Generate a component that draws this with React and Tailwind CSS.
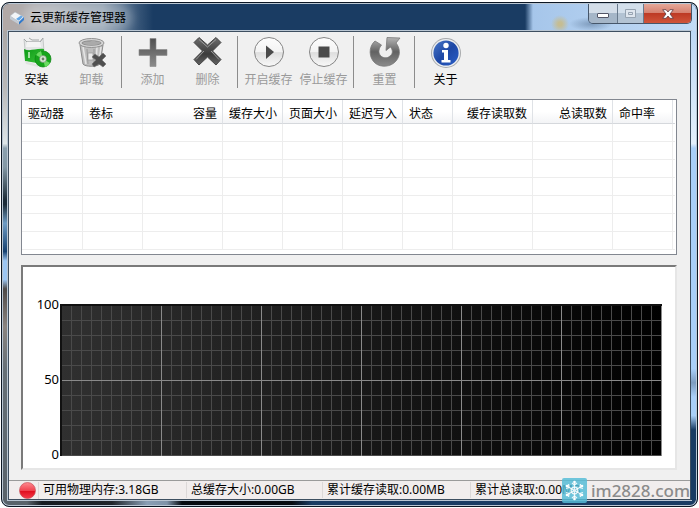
const tools = [
  [
    { label: '安装', icon: InstallIcon, enabled: true },
    { label: '卸载', icon: TrashIcon },
  ],
  [
    { label: '添加', icon: PlusIcon },
    { label: '删除', icon: CrossIcon },
  ],
  [
    { label: '开启缓存', icon: PlayIcon },
    { label: '停止缓存', icon: StopIcon },
  ],
  [{ label: '重置', icon: ResetIcon }],
  [{ label: '关于', icon: InfoIcon, enabled: true }],
]

const columns = [
  { title: '驱动器', className: 'w-[61px] text-left' },
  { title: '卷标', className: 'w-[60px] text-left' },
  { title: '容量', className: 'w-[80px] text-right' },
  { title: '缓存大小', className: 'w-[60px] text-left' },
  { title: '页面大小', className: 'w-[60px] text-left' },
  { title: '延迟写入', className: 'w-[60px] text-left' },
  { title: '状态', className: 'w-[50px] text-left' },
  { title: '缓存读取数', className: 'w-[80px] text-right' },
  { title: '总读取数', className: 'w-[80px] text-right' },
  { title: '命中率', className: 'w-[60px] text-left' },
]

const emptyRows = [0, 1, 2, 3, 4, 5, 6]

function InstallIcon() {
  return (
    <svg viewBox="0 0 32 32" className="size-8">
      <defs>
        <linearGradient id="boxGreen" x1="0" x2="1" y1="0" y2="1">
          <stop offset="0" stopColor="#0c9a16" />
          <stop offset="1" stopColor="#3fc63c" />
        </linearGradient>
      </defs>
      <path d="M3 3 6 6h13l3-4 1 14-19-2z" fill="#e4e6e6" stroke="#b5b9b9" strokeWidth=".7" />
      <path d="M3 3 6 6h13l3-4M8 2l3 2h7" fill="none" stroke="#a2a6a6" />
      <path d="M6 6h13l1 5H5z" fill="#f4f4f4" />
      <path d="M3 13c6 3 12-1 20 0l-1 15-18-3z" fill="url(#boxGreen)" />
      <path d="M4 25l14 4-1 2-12-3z" fill="#dfe3df" />
      <path d="M8 16v6" stroke="#d5f5d2" strokeWidth="1.5" />
      <circle cx="22" cy="23" r="8" fill="#16a51c" stroke="#0b8212" strokeWidth=".7" />
      <path d="M22 23 15 19a8 8 0 0 1 5-4zM22 23l7 4a8 8 0 0 1-5 4z" fill="#6bdc62" />
      <circle cx="22" cy="23" r="3.4" fill="#d9eed6" stroke="#777" strokeWidth=".6" />
      <circle cx="22" cy="23" r="1.4" fill="#6d7c6b" />
    </svg>
  )
}

function TrashIcon() {
  return (
    <svg viewBox="0 0 32 32" className="size-8">
      <path d="M4 9 7 28c2 3 14 3 17 0l3-19z" fill="#bdbdbd" stroke="#8b8b8b" />
      <path d="M7 11l3 17M21 11l-1 17M25 11l-2 14" stroke="#e5e5e5" strokeWidth="1.5" />
      <path d="M11 13l1 15M18 13v15" stroke="#999" />
      <ellipse cx="15.500" cy="7" rx="12.500" ry="4.500" fill="#d6d6d6" stroke="#929292" />
      <ellipse cx="15.500" cy="7" rx="10" ry="2.800" fill="#8a8a8a" />
      <path d="M6 7c4-3 8 0 11-3 3 3 6 0 8 3-5 3-14 3-19 0z" fill="#aaa" />
      <path d="M12 17h5v7h-5z" fill="#e9e9e9" stroke="#9a9a9a" strokeWidth=".7" />
      <path d="M16 21l3-3 4 3 4-4 3 3-4 4 4 4-3 3-4-3-5 3-2-3 4-4z" fill="#4f4f4f" stroke="#707070" strokeWidth=".6" />
    </svg>
  )
}

function PlusIcon() {
  return (
    <svg viewBox="0 0 32 32" className="size-8">
      <defs>
        <linearGradient id="plusGray" x1="0" x2="0" y1="0" y2="1">
          <stop offset="0" stopColor="#505050" />
          <stop offset="1" stopColor="#8c8c8c" />
        </linearGradient>
      </defs>
      <path d="M13 2.500h6v11h11v6H19v11h-6v-11H2v-6h11z" fill="url(#plusGray)" stroke="#8a8a8a" strokeWidth=".6" />
    </svg>
  )
}

function CrossIcon() {
  return (
    <svg viewBox="0 0 32 32" className="size-8">
      <defs>
        <linearGradient id="crossGray" x1="0" x2="0" y1="0" y2="1">
          <stop offset="0" stopColor="#6e6e6e" />
          <stop offset=".6" stopColor="#3c3c3c" />
          <stop offset="1" stopColor="#636363" />
        </linearGradient>
      </defs>
      <path
        d="M7 1.500 15.500 9l8.500-7.500 5 5L20.500 15l8.500 8.500-5 5.500-8.500-8-8.500 8-5-5.500L10.500 15 2 6.500z"
        fill="url(#crossGray)"
        stroke="#474747"
        strokeLinejoin="round"
      />
      <path d="M7 3.500l8.500 7.500L24 3.500M4 23.500l8-8.500M27 23.500 19 15" fill="none" stroke="#9c9c9c" />
    </svg>
  )
}

function RoundFace({ children }) {
  return (
    <svg viewBox="0 0 32 32" className="size-8">
      <defs>
        <linearGradient id="roundFace" x1="0" x2="0" y1="0" y2="1">
          <stop offset="0" stopColor="#fdfdfd" />
          <stop offset=".5" stopColor="#f3f3f3" />
          <stop offset=".52" stopColor="#dedede" />
          <stop offset="1" stopColor="#f9f9f9" />
        </linearGradient>
      </defs>
      <circle cx="16" cy="16" r="14.500" fill="url(#roundFace)" stroke="#858585" />
      {children}
    </svg>
  )
}

function PlayIcon() {
  return (
    <RoundFace>
      <path d="M13 9.500l8 6.500-8 7z" fill="#4a4a4a" />
    </RoundFace>
  )
}

function StopIcon() {
  return (
    <RoundFace>
      <path d="M10.500 10.500h11v11h-11z" fill="#4a4a4a" />
    </RoundFace>
  )
}

function ResetIcon() {
  return (
    <svg viewBox="0 0 32 32" className="size-8">
      <defs>
        <linearGradient id="resetGray" x1="0" x2="0" y1="0" y2="1">
          <stop offset="0" stopColor="#b4b4b4" />
          <stop offset=".5" stopColor="#626262" />
          <stop offset="1" stopColor="#8c8c8c" />
        </linearGradient>
      </defs>
      <path
        d="M6 5C-1 11 0 22 6 27c6 5 16 4 21-2 5-6 4-13 0-18l4-5-13-.500-1 13 4.500-3.500c3 4 2 7-.500 9-3 3-8 2-10-1-2-3-1-7 1.500-10z"
        fill="url(#resetGray)"
        stroke="#777"
        strokeWidth=".8"
      />
    </svg>
  )
}

function InfoIcon() {
  return (
    <svg viewBox="0 0 32 32" className="size-8">
      <defs>
        <linearGradient id="infoBlue" x1="0" x2="1" y1="0" y2="1">
          <stop offset="0" stopColor="#4a78c8" />
          <stop offset=".5" stopColor="#1d47a5" />
          <stop offset="1" stopColor="#2a5fc8" />
        </linearGradient>
      </defs>
      <circle cx="16" cy="17" r="15" fill="#a7a9ac" />
      <circle cx="16" cy="17" r="14" fill="#eceef0" />
      <circle cx="16" cy="17" r="12.600" fill="url(#infoBlue)" />
      <circle cx="16" cy="9.500" r="2.700" fill="#fff" />
      <path d="M12 14h6v10h2.500v2.500h-9V24H14v-7.500h-2z" fill="#fff" />
    </svg>
  )
}

function DriveIcon() {
  return (
    <svg viewBox="0 0 16 16" className="size-4">
      <path d="M1 6 6 2l9 5-5 5z" fill="#f2f5f8" stroke="#a7b0ba" strokeWidth=".5" />
      <path d="M1 6l9 6v2.500L1 9z" fill="#c3cbd4" />
      <path d="M10 12l5-5v3l-5 4.500z" fill="#2270c9" />
      <path d="M7 9l5-3.500 2 1.200-4 4z" fill="#5ea4e6" />
    </svg>
  )
}

function SnowIcon() {
  return (
    <svg viewBox="0 0 25 25" className="size-[25px] shrink-0">
      <rect width="25" height="25" rx="2" fill="#55bcd6" fillOpacity=".84" />
      <g stroke="#fff" strokeWidth="1.300" fill="none" strokeOpacity=".85">
        <circle cx="12.500" cy="12.500" r="3.300" />
        <path d="M12.500 3.500v18M4.700 8l15.600 9M4.700 17l15.600-9" />
        <path d="M10 5l2.500 2L15 5M10 20l2.500-2 2.500 2M4 10.500l3-1L6.500 6M21 10.500l-3-1 .500-3.500M4 14.500l3 1L6.500 19M21 14.500l-3 1 .500 3.500" />
      </g>
      <g fill="#fff">
        <circle cx="12.500" cy="4" r="1.300" />
        <circle cx="12.500" cy="21" r="1.300" />
        <circle cx="5" cy="8" r="1.300" />
        <circle cx="20" cy="8" r="1.300" />
        <circle cx="5" cy="17" r="1.300" />
        <circle cx="20" cy="17" r="1.300" />
      </g>
    </svg>
  )
}

function TitleBar() {
  return (
    <header className="flex h-[27px] shrink-0 items-start justify-between rounded-t-md bg-[radial-gradient(circle_at_557px_20px,#c5bd93_2px,transparent_9px),radial-gradient(ellipse_22px_7px_at_588px_20px,#7f9cbd,transparent),linear-gradient(90deg,#b3a9a6_0px,#a9aeb5_50px,#8d9dad_100px,#4b6786_125px,#1a3c63_150px,#1a3c63_522px,#a6c6ea_530px,#c2dbf6_100%)] pr-1 pl-[6px]">
      <div className="flex h-full items-center gap-1">
        <DriveIcon />
        <h1 className="rounded-full bg-white/25 px-[1px] text-xs leading-4 shadow-[0_0_8px_6px_rgba(255,255,255,0.25)]">
          云更新缓存管理器
        </h1>
      </div>
      <div className="flex h-5 overflow-hidden rounded-b-[5px] border border-t-0 border-[#46566a]">
        <button
          type="button"
          aria-label="最小化"
          className="flex w-7 items-center justify-center bg-linear-to-b from-[#d3dde8] from-50% to-[#a5b6c8] to-50% pt-1"
        >
          <svg viewBox="0 0 12 5" className="h-[5px] w-3">
            <rect x=".5" y=".5" width="11" height="4" rx=".5" fill="#fff" stroke="#535666" />
          </svg>
        </button>
        <button
          type="button"
          aria-label="最大化"
          disabled
          className="flex w-[27px] items-center justify-center border-x border-[#68798c] bg-linear-to-b from-[#d3dfeb] from-50% to-[#b3c3d3] to-50%"
        >
          <svg viewBox="0 0 11 9" className="h-[9px] w-[11px]">
            <path d="M.5.5h10v8H.5zM3.500 3.500h4v2h-4z" fill="#dfe6ee" stroke="#96a3b1" />
          </svg>
        </button>
        <button
          type="button"
          aria-label="关闭"
          className="flex w-[47px] items-center justify-center bg-[linear-gradient(180deg,#e5a798,#d5806f_48%,#bd3a24_50%,#d0543a)]"
        >
          <svg viewBox="0 0 12 10" className="h-[10px] w-3">
            <path d="M.7.7h3.400L6 3 7.900.7h3.400L8 5l3.300 4.300H7.900L6 7 4.100 9.300H.7L4 5z" fill="#fff" stroke="#5c3b42" strokeWidth=".8" />
          </svg>
        </button>
      </div>
    </header>
  )
}

function Toolbar() {
  return (
    <div role="toolbar" className="flex pt-1">
      {tools.map((group, i) => (
        <div key={i} className="flex">
          {i > 0 && (
            <div className="w-[6px] pl-[2px]">
              <div className="h-full w-px bg-[#8c8c8c]" />
            </div>
          )}
          {group.map(({ label, icon: Icon, enabled }) => (
            <button
              key={label}
              type="button"
              disabled={!enabled}
              className="flex h-[52px] w-[55px] flex-col items-center gap-1 text-xs leading-4 whitespace-nowrap text-black disabled:text-[#9a9a9a]"
            >
              <Icon />
              {label}
            </button>
          ))}
        </div>
      ))}
    </div>
  )
}

function DriveTable() {
  return (
    <div className="border border-[#828790] bg-white pr-px pb-1">
      <table className="w-full table-fixed border-separate border-spacing-0 text-xs leading-4">
        <thead>
          <tr>
            {columns.map((c) => (
              <th
                key={c.title}
                className={`h-6 border-r border-b border-r-[#dfe2e6] border-b-[#d5d8dc] bg-linear-to-b from-white from-50% to-[#f3f4f6] pt-1 pr-[5px] pl-[6px] font-normal whitespace-nowrap ${c.className}`}
              >
                {c.title}
              </th>
            ))}
            <th className="border-b border-[#d5d8dc] p-0" />
          </tr>
        </thead>
        <tbody>
          {emptyRows.map((row) => (
            <tr key={row}>
              {columns.map((c) => (
                <td key={c.title} className="h-[18px] border-r border-b border-[#ededed] p-0" />
              ))}
              <td className="border-b border-[#ededed] p-0" />
            </tr>
          ))}
        </tbody>
      </table>
    </div>
  )
}

function HitChart() {
  return (
    <div className="flex border-2 border-t-[#7a7a7a] border-r-[#e6e6e6] border-b-[#e6e6e6] border-l-[#7a7a7a] bg-white pt-[37px] pr-[13px] pb-3">
      <div className="-mt-2 -mb-[6px] flex w-[37px] shrink-0 flex-col justify-between pr-px text-right text-[13px] leading-4">
        <span>100</span>
        <span>50</span>
        <span>0</span>
      </div>
      <svg className="h-[152px] min-w-0 flex-1">
        <defs>
          <linearGradient id="plotFill">
            <stop offset="0" stopColor="#303030" />
            <stop offset="1" stopColor="#000" />
          </linearGradient>
          <pattern id="minor" x="1" y="1" width="10" height="15" patternUnits="userSpaceOnUse">
            <path d="M0 0h1v15H0zM1 0h9v1H1z" fill="#4a4a4a" />
          </pattern>
          <pattern id="major" x="1" y="0" width="100" height="152" patternUnits="userSpaceOnUse">
            <path d="M0 0h1v152H0zM1 76h99v1H1z" fill="#8a8a8a" />
          </pattern>
        </defs>
        <rect width="100%" height="100%" fill="url(#plotFill)" />
        <rect width="100%" height="100%" fill="url(#minor)" />
        <rect width="100%" height="100%" fill="url(#major)" />
        <rect width="100%" height="2" fill="#111" />
        <rect width="2" height="100%" fill="#111" />
      </svg>
    </div>
  )
}

function StatusBar() {
  return (
    <footer className="relative flex h-[19px] items-center border-t border-[#9a9a9a] bg-[#f1eded] text-xs leading-4 whitespace-nowrap">
      <div className="flex w-[30px] justify-center border-r border-[#dcd8d8] pl-2">
        <svg viewBox="0 0 17 17" className="size-[17px]">
          <defs>
            <linearGradient id="lamp" x1="0" x2="0" y1="0" y2="1">
              <stop offset="0" stopColor="#ff8a90" />
              <stop offset=".5" stopColor="#f04350" />
              <stop offset=".55" stopColor="#e00f20" />
              <stop offset="1" stopColor="#f53b4a" />
            </linearGradient>
          </defs>
          <circle cx="8.500" cy="8.500" r="8" fill="url(#lamp)" stroke="#c7505a" strokeWidth=".7" />
        </svg>
      </div>
      <div className="w-[148px] border-r border-[#dcd8d8] pl-1">可用物理内存:3.18GB</div>
      <div className="w-[136px] border-r border-[#dcd8d8] pl-1">总缓存大小:0.00GB</div>
      <div className="w-[148px] border-r border-[#dcd8d8] pl-1">累计缓存读取:0.00MB</div>
      <div className="pl-1">累计总读取:0.00MB</div>
      <div className="absolute -top-[3px] right-0 flex items-center gap-1 text-[17px] leading-6 font-medium text-[#8b8b8b]">
        <SnowIcon />
        im2828.com
      </div>
    </footer>
  )
}

export default function App() {
  return (
    <div className="min-h-screen bg-white px-px pt-[2px] pb-px font-['Noto_Sans','Noto_Sans_CJK_SC',sans-serif] text-black">
      <div className="flex flex-col rounded-lg border border-[#0c1724] bg-[linear-gradient(90deg,#59636b_0px,#59636b_25px,#151b21_40px,#20262c_110px,#8a9fb5_145px,#7f93a8_165px,#050a10_180px,#050a10_290px,#1a3c63_310px)] p-px shadow-[inset_0_0_0_1px_#b9c6d3]">
        <TitleBar />
        <div className="flex">
          <div className="w-[5px] shrink-0 bg-[linear-gradient(180deg,#aaa7a6,#b8b8b8_12%,#dde5e8_24%,#8ba0ae_25%,#8398a5_29%,#1c2c38_36%,#1c2c38_37%,#6e9cc4_41%,#15406f_47%,#9cc6f2_49%,#9cc6f2_53%,#4e4a48_55%,#8a8480_63%,#667077_72%,#59636b)]" />
          <main className="min-w-0 flex-1 border border-[#3e4f60] bg-[#f0f0f0] shadow-[0_0_0_1px_#b9c6d3]">
            <Toolbar />
            <div className="flex flex-col gap-[10px] pt-[11px] pr-[13px] pb-[10px] pl-3">
              <DriveTable />
              <HitChart />
            </div>
            <StatusBar />
          </main>
          <div className="w-[5px] shrink-0 bg-[linear-gradient(180deg,#bdd8f5,#e3effb_24%,#a9cff8_25%,#a9cff8_72%,#7d9cbf_75%,#a9cff8_78%,#a9cff8_82%,#1a3c63_85%)]" />
        </div>
        <div className="h-[5px]" />
      </div>
    </div>
  )
}
